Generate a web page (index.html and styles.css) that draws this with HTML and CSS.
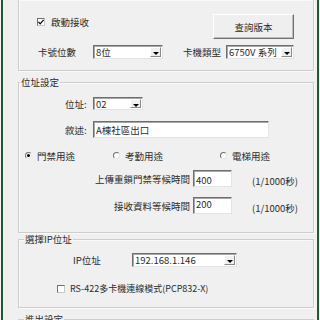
FILE: index.html
```html
<!DOCTYPE html>
<html>
<head>
<meta charset="utf-8">
<link rel="stylesheet" href="styles.css">
</head>
<body>
<div class="win">
  <div class="grp grp1">
    <div class="row r1">
      <span class="chk"><span class="box"><svg viewBox="0 0 8 8" width="8" height="8"><path d="M1.5 4 L3.2 5.8 L6.6 1.8" fill="none" stroke="#111" stroke-width="1.3"/></svg></span>啟動接收</span>
      <span class="btn">查詢版本</span>
    </div>
    <div class="row r2">
      <span class="lbl l1">卡號位數</span>
      <span class="combo c1"><span class="val">8位</span><span class="arr"></span></span>
      <span class="lbl l2">卡機類型</span>
      <span class="combo c2"><span class="val">6750V 系列</span><span class="arr"></span></span>
    </div>
  </div>

  <fieldset class="grp grp2">
    <legend class="lg lg2">位址設定</legend>
    <div class="row r-addr">
      <span class="lbl la">位址:</span>
      <span class="combo c3"><span class="val">02</span><span class="arr"></span></span>
    </div>
    <div class="row r-desc">
      <span class="lbl la">敘述:</span>
      <span class="edit e-desc">A棟社區出口</span>
    </div>
    <div class="row r-radio">
      <span class="rad rad1"><span class="dot on"></span>門禁用途</span>
      <span class="rad rad2"><span class="dot"></span>考勤用途</span>
      <span class="rad rad3"><span class="dot"></span>電梯用途</span>
    </div>
    <div class="row r-t r-t1">
      <span class="lbl lt">上傳重鎖門禁等候時間</span>
      <span class="edit e-num e1">400</span>
      <span class="unit">(1/1000秒)</span>
    </div>
    <div class="row r-t r-t2">
      <span class="lbl lt">接收資料等候時間</span>
      <span class="edit e-num e2">200</span>
      <span class="unit">(1/1000秒)</span>
    </div>
  </fieldset>

  <fieldset class="grp grp3">
    <legend class="lg lg3">選擇IP位址</legend>
    <div class="row r-ip">
      <span class="lbl lip">IP位址</span>
      <span class="combo c4"><span class="val">192.168.1.146</span><span class="arr"></span></span>
    </div>
    <div class="row r-rs">
      <span class="chk"><span class="box"></span>RS-422多卡機連線模式(PCP832-X)</span>
    </div>
  </fieldset>

  <fieldset class="grp grp4">
    <legend class="lg lg3">進出設定</legend>
  </fieldset>
</div>
</body>
</html>
```

FILE: styles.css
```css
* { box-sizing: border-box; }
html, body {
  margin: 0;
  padding: 0;
  width: 320px;
  height: 320px;
  overflow: hidden;
  background: #f4f4f4;
}
body {
  font: 9.5px/10px "Noto Sans CJK TC", "Liberation Sans", sans-serif;
  color: #2b2b2b;
}
.win {
  margin-left: 1px;
  width: 318px;
  height: 320px;
  border-left: 2px solid #1f5a34;
  border-right: 2px solid #1f5a34;
  background: #f0f0f0;
  display: flex;
  flex-direction: column;
  overflow: hidden;
}
.grp {
  flex: none;
  margin: 0 0 0 15px;
  width: 296px;
  min-width: 0;
  padding: 0;
  border: 1px solid #cdcdcd;
  box-shadow: inset 1px 1px 0 #fafafa, 1px 1px 0 #fafafa;
}
.row { display: flex; align-items: center; white-space: nowrap; }

/* group 1 */
.grp1 {
  border-top: 0;
  height: 71px;
  padding-top: 14px;
}
.r1 { height: 25px; padding-left: 18px; }
.r1 .chk { align-self: flex-start; margin-top: 3px; }
.chk { display: flex; align-items: center; }
.box {
  flex: none;
  width: 8px;
  height: 8px;
  margin-right: 6px;
  background: #fff;
  border: 1px solid #6f6f6f;
  border-right-color: #c9c9c9;
  border-bottom-color: #c9c9c9;
  display: flex;
  align-items: center;
  justify-content: center;
}
.box svg { display: block; flex: none; }
.btn {
  margin-left: auto;
  margin-right: 19px;
  width: 81px;
  height: 25px;
  display: flex;
  align-items: center;
  justify-content: center;
  background: #efefef;
  border: 1px solid;
  border-color: #ffffff #707070 #707070 #ffffff;
  box-shadow: inset -1px -1px 0 #bdbdbd;
}
.r2 { margin-top: 6px; height: 14px; padding-left: 19px; }
.l1 { width: 55px; }
.l2 { width: 43px; margin-left: 20px; }

.combo {
  flex: none;
  height: 14px;
  display: flex;
  align-items: stretch;
  background: #fff;
  border: 1px solid;
  border-color: #6e6e6e #e4e4e4 #e4e4e4 #6e6e6e;
  box-shadow: inset 1px 1px 0 #a8a8a8;
}
.combo .val { flex: 1; padding-left: 2px; display: flex; align-items: center; white-space: nowrap; overflow: hidden; }
.combo .arr {
  width: 11px;
  margin: 1px;
  background: #f0f0f0;
  border: 1px solid;
  border-color: #fff #8a8a8a #8a8a8a #fff;
  position: relative;
}
.combo .arr::after {
  content: "";
  position: absolute;
  left: 2px;
  top: 4px;
  border-left: 3px solid transparent;
  border-right: 3px solid transparent;
  border-top: 3px solid #000;
}
.c1 { width: 70px; }
.c2 { width: 68px; }
.c3 { width: 50px; height: 13px; }
.c4 { width: 105px; }

/* fieldsets */
.lg {
  padding: 0 1px;
  margin-left: 1px;
  line-height: 10px;
}
.lg3 { margin-left: 5px; }
.grp2 { margin-top: 6px; height: 156px; }
.grp3 { margin-top: 1px; height: 74px; }
.grp4 { margin-top: 6px; height: 30px; }

.r-addr { margin-top: 10px; height: 13px; padding-left: 46px; }
.r-desc { margin-top: 11px; height: 17px; padding-left: 46px; }
.la { width: 28px; }
.edit {
  flex: none;
  height: 17px;
  background: #fff;
  border: 1px solid;
  border-color: #6e6e6e #e4e4e4 #e4e4e4 #6e6e6e;
  box-shadow: inset 1px 1px 0 #a8a8a8;
  padding: 3px 0 0 2px;
  white-space: nowrap;
}
.e-desc { width: 176px; }

.r-radio { margin-top: 13px; height: 9px; padding-left: 6px; }
.rad { display: flex; align-items: center; }
.rad1 { width: 88px; }
.rad2 { width: 107px; }
.dot {
  flex: none;
  width: 7px;
  height: 7px;
  border-radius: 50%;
  margin-right: 5px;
  background: #fff;
  border: 1px solid;
  border-color: #6f6f6f #e6e6e6 #e6e6e6 #6f6f6f;
  display: flex;
  align-items: center;
  justify-content: center;
}
.dot.on::after {
  content: "";
  width: 3px;
  height: 3px;
  border-radius: 50%;
  background: #000;
}

.r-t { margin-top: 10px; height: 17px; }
.lt { width: 171px; text-align: right; }
.e-num { width: 39px; margin-left: 3px; }
.e1 { padding-top: 4px; }
.e2 { padding-top: 1px; }
.unit { margin-left: 20px; align-self: flex-end; padding-bottom: 1px; }

.r-ip { margin-top: 9px; height: 14px; padding-left: 54px; }
.lip { width: 59px; }
.r-rs { margin-top: 17px; height: 10px; padding-left: 38px; font-size: 9px; }
.r-rs .box { margin-right: 5px; }
```
